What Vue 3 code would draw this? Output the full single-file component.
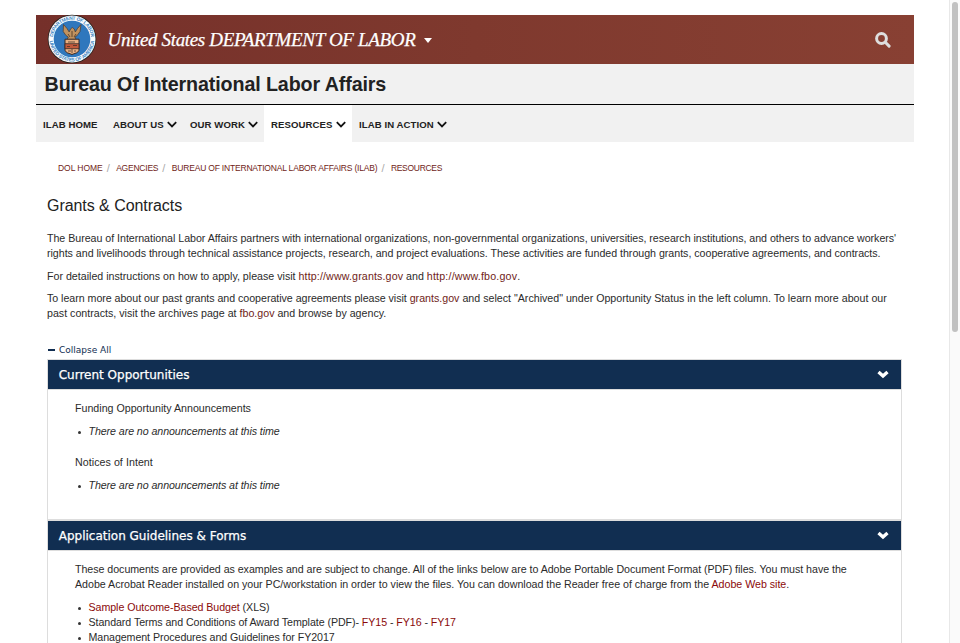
<script setup>
const nav = [
  { label: 'ILAB HOME', cls: 'n1', menu: false },
  { label: 'ABOUT US', cls: 'n2', menu: true },
  { label: 'OUR WORK', cls: 'n3', menu: true },
  { label: 'RESOURCES', cls: 'n4 active', menu: true },
  { label: 'ILAB IN ACTION', cls: 'n5', menu: true },
]
</script>

<template>
  <div class="page">
    <div class="container">
      <header class="banner">
        <svg class="seal" viewBox="0 0 50 50">
          <defs>
            <path id="ringTop" d="M5.8 25a19.2 19.2 0 0 1 38.4 0" />
            <path id="ringBottom" d="M2.6 25a22.4 22.4 0 0 0 44.8 0" />
          </defs>
          <circle cx="25" cy="25" r="24.3" fill="#27221f" />
          <circle cx="25" cy="25" r="23.5" fill="#f8fbfd" />
          <circle cx="25" cy="25" r="18.3" fill="#2f77bd" />
          <text class="ring"><textPath href="#ringTop" startOffset="2" textLength="56">DEPARTMENT OF LABOR</textPath></text>
          <text class="ring"><textPath href="#ringBottom" startOffset="2" textLength="66">UNITED STATES OF AMERICA</textPath></text>
          <path d="M16.500 10.500l3.500 4 2.200 3.500 1.300-3 1.800-1.500 2 1.500 1 3 2.200-3.500 3.500-4-1 7-2.800 4-2.300 1.500 1.200 2.500h-9l1.200-2.500-2.300-1.500-2.800-4z" fill="#c0925f" stroke="#4a3829" stroke-width=".7" />
          <path d="M25 17v6M21 20l2 3M29 20l-2 3" stroke="#473422" stroke-width=".8" />
          <path d="M18 25.200h14v11.500q-1 2.300-7 3.800-6-1.500-7-3.800z" fill="#eab183" stroke="#392b27" />
          <path d="M18 29.700h14v5h-14z" fill="#c25a3c" stroke="#392b27" stroke-width=".8" />
          <path d="M21 28h7M20 32.500h3M26 31.500h4M25 35v4M21 37h3M27 37h2" stroke="#493329" stroke-width=".8" />
        </svg>
        <span class="dept">United States DEPARTMENT OF LABOR</span>
        <span class="caret"></span>
        <svg class="search" viewBox="0 0 16 16"><circle cx="6.500" cy="6.500" r="4.900" /><path d="M10.300 10.300l3.800 3.800" /></svg>
      </header>
      <div class="agency"><span>Bureau Of International Labor Affairs</span></div>
      <nav class="nav">
        <a v-for="n in nav" :key="n.label" :class="n.cls">
          <span>{{ n.label }}</span>
          <svg v-if="n.menu" viewBox="0 0 10 7"><path d="M.8 1.200l4.200 4.200 4.200-4.200" /></svg>
        </a>
      </nav>
      <div class="crumbs">
        <a class="c1">DOL HOME</a><i>/</i><a class="c2">AGENCIES</a><i>/</i><a class="c3">BUREAU OF INTERNATIONAL LABOR AFFAIRS (ILAB)</a><i>/</i><a class="c4">RESOURCES</a>
      </div>
      <main>
        <h1>Grants &amp; Contracts</h1>
        <p><span class="l1">The Bureau of International Labor Affairs partners with international organizations, non-governmental organizations, universities, research institutions, and others to advance workers'</span><br><span class="l2">rights and livelihoods through technical assistance projects, research, and project evaluations. These activities are funded through grants, cooperative agreements, and contracts.</span></p>
        <p><span class="l3">For detailed instructions on how to apply, please visit <a class="u1">http://www.grants.gov</a> and <a class="u2">http://www.fbo.gov</a>.</span></p>
        <p><span class="l4">To learn more about our past grants and cooperative agreements please visit </span><span><a>grants.gov</a> and select "Archived" under Opportunity Status in the left column. To learn more about our</span><br><span class="l5">past contracts, visit the archives page at <a>fbo.gov</a> and browse by agency.</span></p>
        <div class="collapse"><b></b><span>Collapse All</span></div>
        <section class="panel first">
          <h2><span>Current Opportunities</span><svg viewBox="0 0 12 9"><path d="M1.500 2l4.500 4 4.500-4" /></svg></h2>
          <div class="body">
            <p class="l6">Funding Opportunity Announcements</p>
            <ul class="single"><li><em>There are no announcements at this time</em></li></ul>
            <p class="l7">Notices of Intent</p>
            <ul class="single"><li><em>There are no announcements at this time</em></li></ul>
          </div>
        </section>
        <section class="panel">
          <h2><span>Application Guidelines &amp; Forms</span><svg viewBox="0 0 12 9"><path d="M1.500 2l4.500 4 4.500-4" /></svg></h2>
          <div class="body">
            <p><span class="l8">These documents are provided as examples and are subject to change. All of the links below are to Adobe Portable Document Format (PDF) files. You must have the</span><br><span class="l9">Adobe Acrobat Reader installed on your PC/workstation in order to view the files. You can download the Reader free of charge from the <a>Adobe Web site</a>.</span></p>
            <ul>
              <li><span class="l10"><a>Sample Outcome-Based Budget</a> (XLS)</span></li>
              <li><span class="l11">Standard Terms and Conditions of Award Template (PDF)- <a>FY15</a> - <a>FY16</a> - <a>FY17</a></span></li>
              <li><span class="l12">Management Procedures and Guidelines for FY2017</span></li>
            </ul>
          </div>
        </section>
      </main>
    </div>
    <div class="scroll"><div class="thumb"></div></div>
  </div>
</template>

<style>
body { margin: 0; background: #fff; overflow: hidden; }
</style>

<style scoped>
.page { display: flex; justify-content: space-between; height: 643px; overflow: hidden; font-family: "Liberation Sans", Arial, sans-serif; font-size: 10.67px; line-height: 15px; color: #2b2b2b; white-space: nowrap; }
.container { width: 877.5px; padding: 15px 0 0 36px; flex: none; }
.banner { display: flex; align-items: center; height: 49px; background: linear-gradient(90deg, #75302a, #7f392e 50%, #884033); }
.seal { width: 50px; height: 50px; margin: -1px 0 0 10.5px; flex: none; }
.ring { font-size: 4.9px; font-weight: bold; fill: #3c84c2; }
.dept { font: italic 19px "Liberation Serif", serif; letter-spacing: -.34px; color: #fff; margin: 0 0 0 11px; width: 309px; -webkit-text-stroke: .25px #fff; }
.caret { border: solid transparent; border-width: 5px 4.5px 0; border-top-color: #fff; margin: 2px 0 0 7px; }
.search { width: 16px; height: 16px; margin: 0 22.5px 0 auto; fill: none; stroke: #dedede; stroke-width: 3; stroke-linecap: round; }
.agency { height: 40px; box-sizing: border-box; padding: 1px 0 0 8.6px; background: #f1f1f1; display: flex; align-items: center; font-size: 19.7px; letter-spacing: -.12px; font-weight: bold; color: #222; }
.nav { display: flex; height: 37px; margin-top: 0; border-top: 1px solid #000; background: #f1f1f1; font-size: 9.6px; letter-spacing: .08px; font-weight: bold; color: #222; }
.nav a { display: flex; align-items: center; box-sizing: border-box; padding: 1px 0 0 7px; }
.nav svg { width: 10px; height: 7px; margin-left: 3px; fill: none; stroke: #111; stroke-width: 1.8; }
.n1 { width: 70px; }
.n2 { width: 77px; }
.n3 { width: 81px; }
.n4 { width: 88px; }
.nav .active { background: #fff; }
.crumbs { display: flex; padding: 19px 0 0 22px; height: 16px; font-size: 8.5px; }
.crumbs i { font-style: normal; font-size: 11px; color: #aaa; box-sizing: border-box; width: 13.5px; padding-left: 4px; line-height: 14px; }
.c1 { letter-spacing: -.05px; }
.c2 { letter-spacing: -.22px; }
.c3 { letter-spacing: -.19px; }
.c4 { letter-spacing: -.3px; }
a { color: #6f1d17; }
.nav a { color: #222; }
main { padding: 0 11px; }
h1 { font-size: 16px; font-weight: normal; line-height: 20px; letter-spacing: -.05px; margin: 19px 0 15px; color: #222; }
p { margin: 0 0 7.5px; }
.l1 { letter-spacing: -.031px; }
.l2 { letter-spacing: -.025px; }
.u1 { letter-spacing: .13px; }
.u2 { letter-spacing: .18px; }
.l4 { letter-spacing: -.037px; }
.l7 { letter-spacing: .05px; }
.l8 { letter-spacing: -.042px; }
.l9 { letter-spacing: -.02px; }
.l10 { letter-spacing: -.06px; }
.l11, .l12 { letter-spacing: -.07px; }
em { letter-spacing: -.08px; }
.collapse { display: flex; align-items: center; margin: 21px 0 2px; height: 15px; font: 9px "DejaVu Sans", sans-serif; color: #112e51; }
.collapse b { width: 7px; height: 2px; background: #112e51; margin: 0 4px 0 1px; }
.panel { border: 1px solid #ddd; box-sizing: border-box; width: 855px; }
.panel.first { height: 161px; }
.panel h2 { display: flex; align-items: center; justify-content: space-between; margin: 0; height: 29px; padding: 0 12px 0 10.7px; background: #112e51; color: #fff; font: 12px "DejaVu Sans", sans-serif; -webkit-text-stroke: .25px #fff; border-bottom: 1px solid #ddd; }
.panel h2 svg { width: 12px; height: 9px; fill: none; stroke: #fff; stroke-width: 3.3; }
.body { padding: 11px 27px 0; }
.body p { margin-bottom: 8px; }
.body a { color: #8b0a0a; }
ul { list-style: none; margin: 0; padding: 0; }
ul.single { margin-bottom: 16px; }
li { display: flex; align-items: center; }
li::before { content: ""; width: 3px; height: 3px; border-radius: 50%; background: #333; margin: 1px 8px 0 2.5px; flex: none; }
.scroll { width: 11px; background: #fafafa; border-left: 1px solid #e8e8e8; box-sizing: border-box; padding: 2px 0 0 2px; }
.thumb { width: 6px; height: 330px; border-radius: 3px; background: #c1c1c1; }
</style>
